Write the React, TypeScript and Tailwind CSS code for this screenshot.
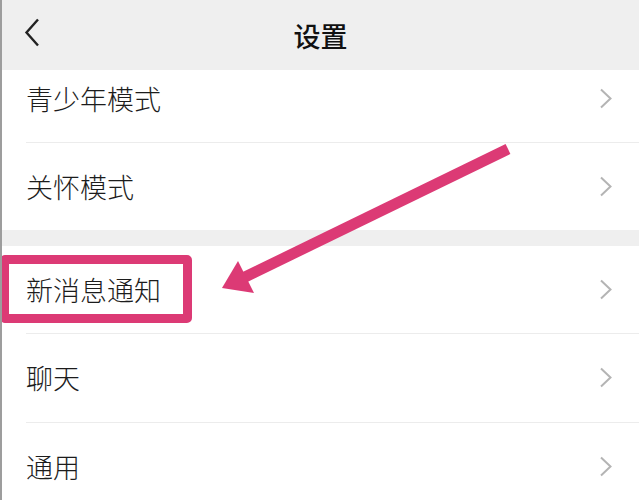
import React from 'react';

const font = { fontFamily: '"Noto Sans CJK SC", "Noto Sans", sans-serif' };

function Chevron() {
  return (
    <svg width="14" height="21" viewBox="0 0 14 21" className="shrink-0">
      <path d="M2 1.5 L11.5 10.5 L2 19.5" fill="none" stroke="#b4b4b4" strokeWidth="2" />
    </svg>
  );
}

function Row({ label, divider, height }: { label: string; divider?: boolean; height: string }) {
  return (
    <div className={`relative flex items-center justify-between pl-[24px] pr-[26px] ${height}`}>
      {divider && <div className="absolute top-0 left-[24px] right-0 border-t border-[#ececec]" />}
      <span className="text-[27px] leading-none font-light text-[#1c1c1c]">{label}</span>
      <Chevron />
    </div>
  );
}

export default function App() {
  return (
    <div className="relative w-[639px] h-[500px] overflow-hidden bg-white border-l-2 border-[#9d9d9d]" style={font}>
      {/* Header */}
      <div className="relative z-10 flex items-center justify-center h-[70px] bg-[#efefef]">
        <svg width="16" height="29" viewBox="0 0 16 29" className="absolute left-[22px] top-[18px]">
          <path d="M14 1.5 L2.5 14.5 L14 27.5" fill="none" stroke="#222" strokeWidth="2.4" />
        </svg>
        <span className="text-[27px] leading-none font-medium text-[#111]">设置</span>
      </div>

      {/* List */}
      <div className="overflow-hidden">
        <div className="-mt-[16px]">
          <Row label="青少年模式" height="h-[88px]" />
          <Row label="关怀模式" divider height="h-[88px]" />
          <div className="h-[16px] bg-[#efefef]" />
          <Row label="新消息通知" height="h-[87px]" />
          <Row label="聊天" divider height="h-[89px]" />
          <Row label="通用" divider height="h-[89px]" />
        </div>
      </div>

      {/* Highlight box */}
      <div className="absolute left-[-2px] top-[255px] w-[192px] h-[68px] border-[9px] border-[#dc3a75] rounded-[5px]" />

      {/* Arrow */}
      <svg className="absolute left-[-2px] top-0 pointer-events-none" width="639" height="500" viewBox="0 0 639 500">
        <line x1="508" y1="149" x2="243" y2="278" stroke="#dc3a75" strokeWidth="11" />
        <polygon points="222,288 238,261 254,293" fill="#dc3a75" />
      </svg>
    </div>
  );
}
